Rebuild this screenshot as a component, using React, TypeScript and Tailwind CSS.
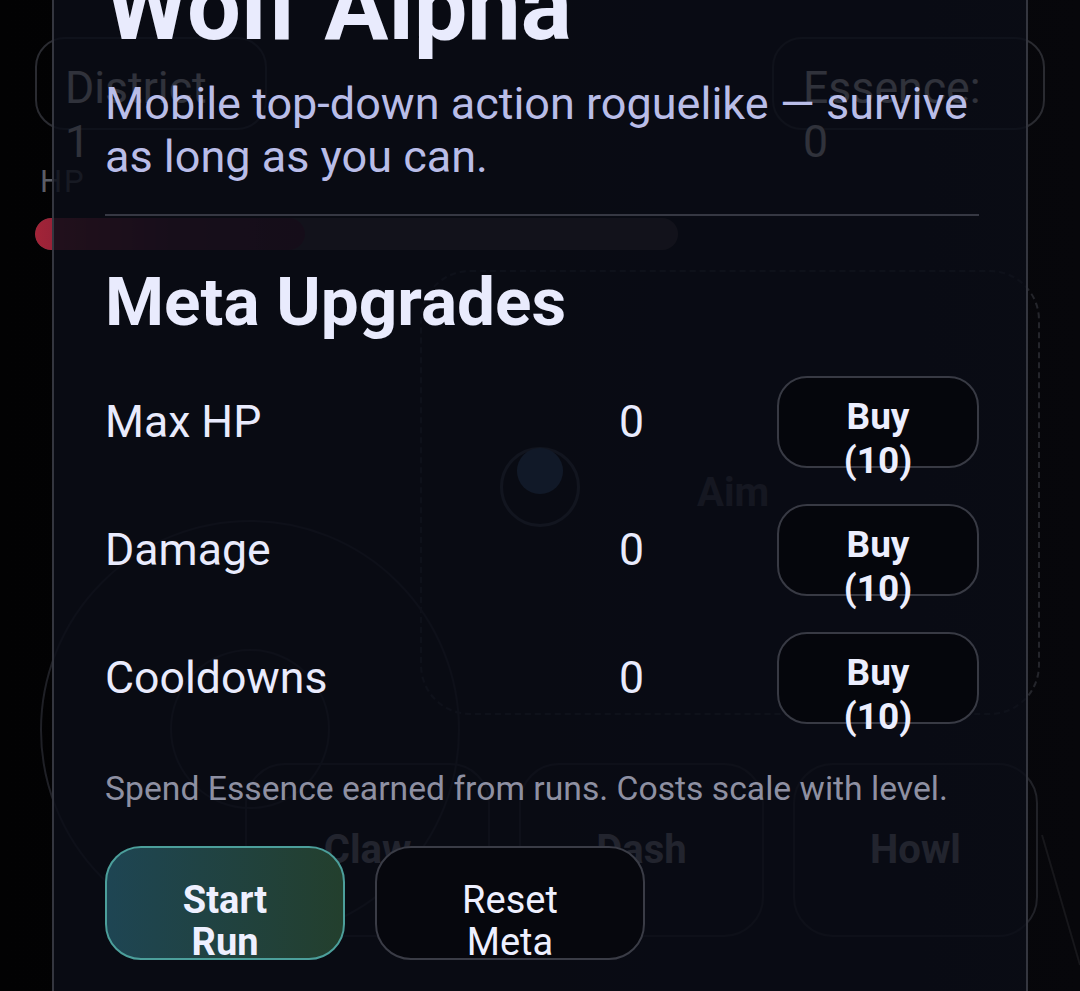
import React from "react";

function AbilityCard({ label }: { label: string }) {
  return (
    <div className="w-[245px] h-[174px] rounded-[40px] border-2 border-[#212228] flex items-center justify-center text-[40px] font-bold text-[#9a9da6]">
      {label}
    </div>
  );
}

function UpgradeRow({ label, value }: { label: string; value: string }) {
  return (
    <div className="grid grid-cols-[1fr_158px_202px] items-center h-[92px]">
      <div className="text-[44.6px] leading-[52px] text-[#e9ebfd]">{label}</div>
      <div className="text-[44.6px] leading-[52px] text-[#e9ebfd]">{value}</div>
      <div className="h-[92px] rounded-[30px] border-2 border-[#383a44] bg-[#05060c] pt-[17px] text-center text-[37px] leading-[44px] font-bold text-[#eceefe]">
        <div>Buy</div>
        <div>(10)</div>
      </div>
    </div>
  );
}

export default function App() {
  return (
    <div className="relative w-[1080px] h-[991px] overflow-hidden bg-gradient-to-r from-[#020203] via-[#040406] to-[#07070b] font-['Roboto','Noto_Sans',sans-serif]">
      {/* Game HUD behind the overlay */}
      <div className="flex flex-col">
        <div className="flex justify-between px-[35px] pt-[37px]">
          <div className="w-[232px] h-[93px] rounded-[30px] border-2 border-[#2a2b31] pl-[28px] pt-[22px] text-[44.6px] leading-[54px] text-[#eef0f4]">
            <div>District</div>
            <div>1</div>
          </div>
          <div className="w-[273px] h-[93px] rounded-[30px] border-2 border-[#2a2b31] pl-[29px] pt-[22px] text-[44.6px] leading-[54px] text-[#eef0f4]">
            <div>Essence:</div>
            <div>0</div>
          </div>
        </div>
        <div className="pl-[40px] mt-[32px] text-[31px] leading-[40px] tracking-[2px] text-[#5a5d66]">HP</div>
        <div className="ml-[35px] mt-[16px] w-[643px] h-[32px] rounded-full bg-[#3a2f32] overflow-hidden">
          <div className="h-full w-[42%] rounded-full bg-gradient-to-r from-[#a32438] via-[#5a1430] to-[#4a1228]" />
        </div>
        <div className="ml-[420px] mt-[20px] w-[620px] h-[445px] rounded-[50px] border-2 border-dashed border-[#24252b] flex items-start">
          <div className="relative ml-[78px] mt-[175px] w-[80px] h-[80px] rounded-full border-[3px] border-[#38414b]">
            <div className="absolute left-[14px] top-[-2px] w-[46px] h-[46px] rounded-full bg-[#335a85]" />
          </div>
          <div className="ml-[117px] self-center text-[40px] font-bold text-[#4c4f5a]">Aim</div>
        </div>
        <div className="ml-[245px] mt-[48px] flex gap-[29px]">
          <AbilityCard label="Claw" />
          <AbilityCard label="Dash" />
          <AbilityCard label="Howl" />
        </div>
      </div>

      {/* Move joystick (free canvas) */}
      <div className="absolute left-[40px] top-[520px] w-[420px] h-[420px] rounded-full border-2 border-[#1f2026]" />
      <div className="absolute left-[170px] top-[649px] w-[160px] h-[160px] rounded-full border-2 border-[#1f2026]" />
      <svg className="absolute left-0 top-0" width="1080" height="991">
        <line x1="1042" y1="835" x2="1080" y2="965" stroke="#17171b" strokeWidth="2" />
      </svg>

      {/* Overlay panel */}
      <div className="absolute left-[52px] top-[-60px] w-[976px] h-[1120px] border-2 border-[#34363f] bg-[#0b0d17]/[0.84] pl-[51px] pr-[47px] pt-[12px]">
        <div className="text-[95.5px] leading-[104px] font-bold text-[#e9ebfd]">Wolf Alpha</div>
        <div className="mt-[19px] text-[45px] leading-[53px] text-[#b9bde8]">
          Mobile top-down action roguelike — survive as long as you can.
        </div>
        <div className="mt-[31px] h-[2px] bg-[#363843]" />
        <div className="mt-[45px] text-[67.5px] leading-[82px] font-bold text-[#e9ebfd]">Meta Upgrades</div>
        <div className="mt-[33px] flex flex-col gap-[36px]">
          <UpgradeRow label="Max HP" value="0" />
          <UpgradeRow label="Damage" value="0" />
          <UpgradeRow label="Cooldowns" value="0" />
        </div>
        <div className="mt-[43px] text-[33.7px] leading-[44px] text-[#8e90a2]">
          Spend Essence earned from runs. Costs scale with level.
        </div>
        <div className="mt-[35px] flex gap-[30px]">
          <div className="w-[240px] h-[114px] rounded-[36px] border-2 border-[#4c9f9b] bg-gradient-to-r from-[#1e4553] to-[#233f2d] pt-[31px] text-center text-[38px] leading-[42px] font-bold text-[#eef0ff]">
            <div>Start</div>
            <div>Run</div>
          </div>
          <div className="w-[270px] h-[114px] rounded-[36px] border-2 border-[#3a3c46] bg-[#06070d] pt-[31px] text-center text-[38px] leading-[42px] text-[#eef0ff]">
            <div>Reset</div>
            <div>Meta</div>
          </div>
        </div>
      </div>
    </div>
  );
}
